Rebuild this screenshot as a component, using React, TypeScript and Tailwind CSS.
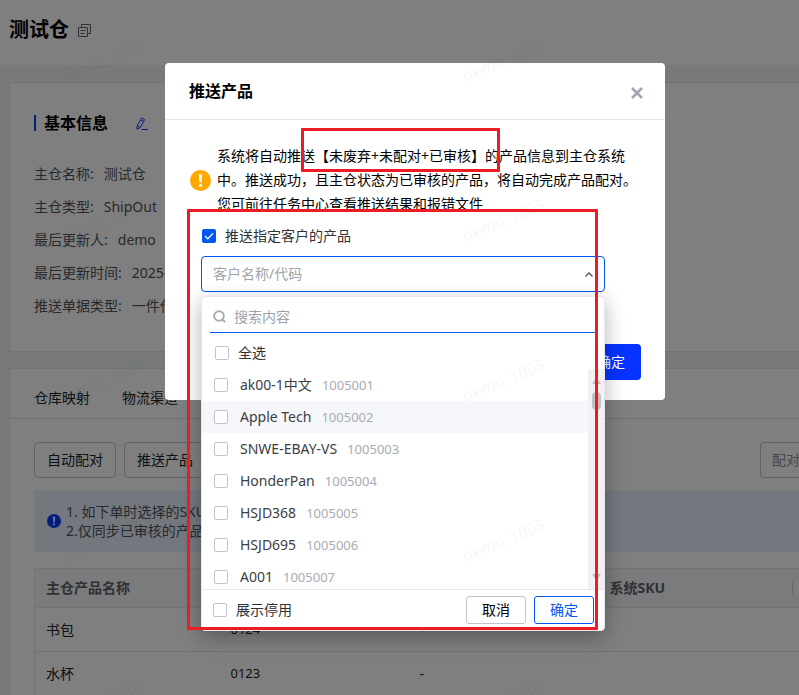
import React, { useState } from "react";

const customers = [
  { name: "ak00-1中文", code: "1005001" },
  { name: "Apple Tech", code: "1005002" },
  { name: "SNWE-EBAY-VS", code: "1005003" },
  { name: "HonderPan", code: "1005004" },
  { name: "HSJD368", code: "1005005" },
  { name: "HSJD695", code: "1005006" },
  { name: "A001", code: "1005007" },
];

const infoFields = [
  { label: "主仓名称", value: "测试仓" },
  { label: "主仓类型", value: "ShipOut" },
  { label: "最后更新人", value: "demo" },
  { label: "最后更新时间", value: "2025-" },
  { label: "推送单据类型", value: "一件代发" },
];

const products = [
  { name: "书包", code: "0124", sku: "-" },
  { name: "水杯", code: "0123", sku: "-" },
];

const CopyIcon = () => (
  <svg width="13" height="13" viewBox="0 0 13 13" fill="none" stroke="#606266" strokeWidth="1">
    <path d="M3.5 3V.5h9v9H10" />
    <path d="M.5 3.5h9v9h-9z" />
    <path d="M2.5 6.5h5M2.5 9.5h4" />
  </svg>
);

const EditIcon = () => (
  <svg width="12" height="13" viewBox="0 0 12 13" fill="none" stroke="#0b3bff" strokeWidth="1">
    <path d="M5.6 1 8.6 2.6 4.4 10.4 1 12.2 1.2 8.7z" strokeLinejoin="round" />
    <path d="M4.6 2.9 7.5 4.5M1.4 8.9l2.8 1.5" />
    <path d="M5.5 12.5H12" />
  </svg>
);

const AlertIcon = ({ color, size }: { color: string; size: number }) => (
  <svg className="shrink-0" width={size} height={size} viewBox="0 0 21 21">
    <circle cx="10.5" cy="10.5" r="10.5" fill={color} />
    <path d="M8.8 4.2h3.4l-.6 8.3H9.4z" fill="#fff" />
    <circle cx="10.5" cy="15.5" r="1.6" fill="#fff" />
  </svg>
);

const Checkbox = ({ id, defaultChecked = false }: { id: string; defaultChecked?: boolean }) => (
  <span className="relative flex w-3.5 h-3.5 shrink-0">
    <input
      id={id}
      type="checkbox"
      defaultChecked={defaultChecked}
      className="peer appearance-none w-3.5 h-3.5 rounded-xs border border-[#c0c4cc] bg-white checked:bg-[#0057f5] checked:border-[#0057f5]"
    />
    <svg
      className="absolute inset-0 hidden peer-checked:block pointer-events-none"
      width="14"
      height="14"
      viewBox="0 0 14 14"
      fill="none"
      stroke="#fff"
      strokeWidth="1.3"
    >
      <path d="M3 7l2.8 2.8L11 4.4" />
    </svg>
  </span>
);

const Watermark = () => (
  <div className="absolute inset-0 overflow-hidden pointer-events-none">
    <div className="absolute -left-24 -top-5 grid grid-cols-[400px_400px] auto-rows-[160px] place-items-center">
      {Array.from({ length: 10 }).map((_, i) => (
        <span key={i} className="-rotate-[22deg] text-base text-black/5">
          demo_1005
        </span>
      ))}
    </div>
  </div>
);

const CustomerDropdown = () => {
  const [keyword, setKeyword] = useState("");

  return (
    <div className="absolute left-0 top-10 w-full bg-white border border-[#e4e7ed] rounded-sm shadow-[0_6px_20px_rgba(0,0,0,0.3)]">
      <div className="mx-2 h-9 flex items-center gap-2 pl-[3px] pt-1 border-b border-[#0057f5]">
        <svg className="shrink-0" width="13" height="13" viewBox="0 0 13 13" fill="none" stroke="#a8abb2" strokeWidth="2">
          <circle cx="6" cy="6" r="4.8" />
          <path d="M9 9l3 3.2" />
        </svg>
        <input
          type="text"
          aria-label="搜索内容"
          value={keyword}
          onChange={(e) => setKeyword(e.target.value)}
          placeholder="搜索内容"
          className="w-full text-sm outline-none placeholder:text-[#a0a3aa]"
        />
      </div>

      <div className="h-9 pt-1 px-[13px] flex items-center gap-[9px]">
        <Checkbox id="all" />
        <label htmlFor="all" className="text-sm text-[#303133]">全选</label>
      </div>

      <div className="flex h-[220px] overflow-hidden">
        <ul className="flex-1">
          {customers.map((item) => (
            <li
              key={item.code}
              className={`h-8 px-3 flex items-center gap-3 text-sm ${item.code === "1005002" ? "bg-[#f5f7fa]" : ""}`}
            >
              <Checkbox id={item.code} />
              <label htmlFor={item.code} className="flex items-baseline gap-2.5 text-[#3c3e42]">
                {item.name}
                <span className="text-[13px] text-[#a8abb2]">{item.code}</span>
              </label>
            </li>
          ))}
        </ul>
        <div className="w-4 bg-[#f1f1f1] flex flex-col items-center pt-2 pb-2">
          <svg width="9" height="7" viewBox="0 0 9 7"><path d="M4.5 0 9 7H0z" fill="#c1c1c1" /></svg>
          <div className="w-[9px] h-[18px] mt-2 rounded-full bg-[#c1c1c1]" />
          <svg className="mt-auto" width="9" height="7" viewBox="0 0 9 7"><path d="M0 0h9L4.5 7z" fill="#c1c1c1" /></svg>
        </div>
      </div>

      <div className="h-[41px] border-t border-[#e4e7ed] pl-[11px] pr-2.5 flex items-center">
        <Checkbox id="disabled" />
        <label htmlFor="disabled" className="ml-[9px] text-sm text-[#303133]">展示停用</label>
        <button type="button" className="ml-auto w-[60px] h-7 text-sm text-black border border-[#c0c4cc] rounded-[3px]">
          取消
        </button>
        <button type="button" className="ml-2 w-[60px] h-7 text-sm text-[#0057f5] border border-[#0057f5] rounded-[3px]">
          确定
        </button>
      </div>
    </div>
  );
};

const PushDialog = () => (
  <div className="absolute inset-0 bg-black/50 flex items-start justify-center pl-[31px] pt-[63px]">
    <div role="dialog" aria-label="推送产品" className="relative w-[500px] bg-white rounded-sm">
      <div className="h-[57px] pl-6 pr-5 flex items-center justify-between border-b border-[#e6e7ea]">
        <h2 className="text-base font-bold text-black">推送产品</h2>
        <button type="button" aria-label="关闭" className="w-4 h-full pt-1 flex items-center justify-center">
          <svg width="12" height="12" viewBox="0 0 12 12" stroke="#a0a5b1" strokeWidth="2.6">
            <path d="M1 1l10 10M11 1L1 11" />
          </svg>
        </button>
      </div>

      <div className="px-[25px] pt-6">
        <div className="flex items-start gap-1.5 h-[66px]">
          <div className="h-[72px] shrink-0 flex items-center">
            <AlertIcon color="#ffa800" size={21} />
          </div>
          <p className="h-full overflow-hidden text-sm leading-6 text-black whitespace-nowrap">
            系统将自动推送【未废弃+未配对+已审核】的产品信息到主仓系统
            <br />
            中。推送成功，且主仓状态为已审核的产品，将自动完成产品配对。
            <br />
            您可前往任务中心查看推送结果和报错文件
          </p>
        </div>
      </div>

      <div className="px-9 pt-4">
        <div className="flex items-center gap-[9px] h-5 pl-px">
          <Checkbox id="assigned" defaultChecked />
          <label htmlFor="assigned" className="text-sm text-[#303133]">推送指定客户的产品</label>
        </div>
        <div className="relative mt-2.5 w-[404px]">
          <select
            aria-label="客户名称/代码"
            defaultValue=""
            className="appearance-none block w-full h-9 px-[11px] text-sm text-[#a0a3aa] bg-white border border-[#0057f5] rounded-sm outline-none"
          >
            <option value="">客户名称/代码</option>
          </select>
          <svg className="absolute right-3 top-4 pointer-events-none" width="8" height="5" viewBox="0 0 8 5" fill="none" stroke="#606266" strokeWidth="1.5">
            <path d="M.5 4.5 4 1l3.5 3.5" />
          </svg>
        </div>
      </div>

      <div className="pt-[52px] px-6 pb-5 flex justify-end">
        <button type="button" className="w-[60px] h-9 text-sm text-white bg-[#0633ff] rounded-sm">确定</button>
      </div>

      {/* opened list, hangs under the select */}
      <div className="absolute left-9 top-[193px] w-[404px]">
        <CustomerDropdown />
      </div>
    </div>
  </div>
);

const Marks = () => (
  <div className="absolute inset-0 flex justify-center pl-[31px] pt-[63px] pointer-events-none">
    <div className="relative w-[500px]">
      <div className="absolute left-[136px] top-[65px] w-[199px] h-[44px] border-3 border-[#ed1c24] rounded-[1px]" />
      <div className="absolute left-[22px] top-[146px] w-[411px] h-[421px] border-3 border-[#ed1c24] rounded-[1px]" />
    </div>
  </div>
);

const WarehousePage = () => (
  <div className="h-full flex flex-col bg-[#eff2f6] text-sm">
    <header className="h-[65px] shrink-0 bg-white flex items-center gap-[9px] px-[9px] pb-1.5">
      <h1 className="text-xl font-bold text-black">测试仓</h1>
      <div className="pt-0.5">
        <CopyIcon />
      </div>
    </header>

    <main className="flex-1 pl-[9px] pt-[17px]">
      <section className="h-[270px] bg-white border border-r-0 border-[#e4e7ed] rounded-l-sm pl-6 pt-7">
        <div className="flex items-center h-6">
          <span className="w-0.5 h-4 bg-[#0b3bff]" />
          <h2 className="ml-2 text-base font-bold text-black">基本信息</h2>
          <button type="button" aria-label="编辑" className="ml-7">
            <EditIcon />
          </button>
        </div>
        <dl className="mt-[22px] text-[#505257]">
          {infoFields.map((f) => (
            <div key={f.label} className="flex items-center gap-2.5 h-[33px]">
              <dt>{f.label}:</dt>
              <dd>{f.value}</dd>
            </div>
          ))}
        </dl>
      </section>

      <section className="mt-4 bg-white border border-r-0 border-b-0 border-[#e4e7ed] rounded-tl-sm">
        <nav className="h-[50px] pl-6 pt-2 flex items-center gap-8 border-b border-[#dcdfe6]">
          <a href="#mapping" className="text-[#202124]">仓库映射</a>
          <a href="#channel" className="text-[#202124]">物流渠道</a>
        </nav>
        <div className="pl-6 pt-[23px]">
          <div className="flex gap-2">
            <button type="button" className="w-[82px] h-9 text-[#202124] border border-[#c0c4cc] rounded-sm">自动配对</button>
            <button type="button" className="w-[82px] h-9 text-[#202124] border border-[#c0c4cc] rounded-sm">推送产品</button>
            <button type="button" className="ml-auto w-[39px] h-9 pl-[11px] text-left whitespace-nowrap overflow-hidden text-[#909399] border border-r-0 border-[#c0c4cc] rounded-l-sm">
              配对
            </button>
          </div>

          <div className="mt-3 h-[62px] pl-[13px] flex items-center gap-[5px] bg-[#e6f0ff] rounded-l-sm text-[#505257]">
            <AlertIcon color="#0b3bff" size={14} />
            <p className="leading-[19px]">
              1. 如下单时选择的SKU
              <br />
              2.仅同步已审核的产品
            </p>
          </div>

          <table className="mt-4 w-full table-fixed text-left border-l border-t border-[#e4e7ed]">
            <colgroup>
              <col className="w-[185px]" />
              <col className="w-[189px]" />
              <col className="w-[190px]" />
              <col />
            </colgroup>
            <thead>
              <tr className="h-[39px] bg-[#f4f6f9] text-[#606266] border-b border-[#e4e7ed]">
                <th className="pl-[11px] font-bold">主仓产品名称</th>
                <th />
                <th />
                <th className="pl-[11px] pr-1.5 font-bold">
                  <div className="flex items-center justify-between">
                    系统SKU
                    <span className="w-px h-3 bg-[#c8cbd2]" />
                  </div>
                </th>
              </tr>
            </thead>
            <tbody className="text-[#202124]">
              {products.map((p) => (
                <tr key={p.code} className="h-11 border-b border-[#e4e7ed]">
                  <td className="pl-[11px]">{p.name}</td>
                  <td className="pl-[11px] text-[13px]">{p.code}</td>
                  <td className="pl-[11px]">{p.sku}</td>
                  <td />
                </tr>
              ))}
            </tbody>
          </table>
        </div>
      </section>
    </main>
  </div>
);

const App: React.FC = () => {
  return (
    <div className="relative h-screen overflow-hidden font-['Noto_Sans','Noto_Sans_CJK_SC',sans-serif]">
      <WarehousePage />
      <PushDialog />
      <Watermark />
      <Marks />
    </div>
  );
};

export default App;
